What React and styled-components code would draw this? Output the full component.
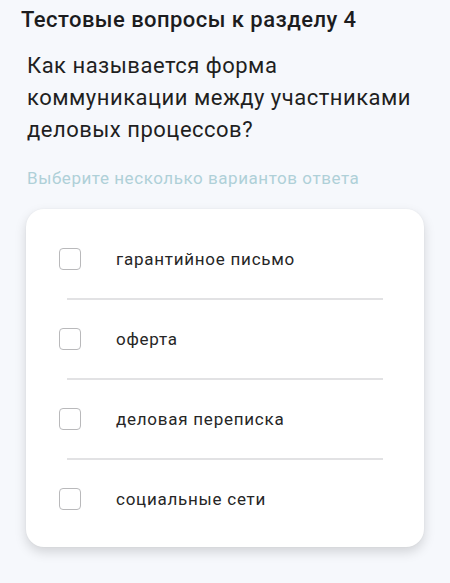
import React from "react";
import styled, { createGlobalStyle } from "styled-components";

const Global = createGlobalStyle`
  html, body { margin: 0; padding: 0; background: #f6f8fc; }
  body { font-family: Roboto, "Noto Sans", sans-serif; -webkit-font-smoothing: antialiased; }
`;

const Page = styled.div`
  width: 450px;
  min-height: 583px;
  box-sizing: border-box;
  padding: 7px 26px 0 21px;
  background: #f6f8fc;
`;

const Title = styled.h1`
  margin: 0;
  font-size: 22px;
  font-weight: 500;
  line-height: 26px;
  letter-spacing: 0.45px;
  color: #1c1c1e;
`;

const Question = styled.p`
  margin: 17px 0 0 6px;
  font-size: 22px;
  font-weight: 400;
  line-height: 32px;
  letter-spacing: 0.5px;
  color: #1f1f1f;
  max-width: 400px;
`;

const Hint = styled.p`
  margin: 22px 0 0 6px;
  font-size: 17px;
  font-weight: 400;
  line-height: 20px;
  letter-spacing: 0.55px;
  color: #afd0d8;
`;

const Card = styled.div`
  margin: 21px 0 0 5px;
  background: #fff;
  border-radius: 18px;
  box-shadow: 0 5px 12px rgba(0, 0, 0, 0.15), 0 0 2px rgba(0, 0, 0, 0.05);
  padding: 11px 0 9px;
`;

const Option = styled.label`
  display: flex;
  align-items: center;
  height: 78px;
  padding-left: 33px;
  box-sizing: border-box;
  cursor: pointer;
`;

const Divider = styled.div`
  height: 2px;
  margin: 0 41px;
  background: #e2e2e4;
`;

const Box = styled.span`
  width: 22px;
  height: 22px;
  box-sizing: border-box;
  border: 1.3px solid #b9b9bb;
  border-radius: 4px;
  flex-shrink: 0;
`;

const Label = styled.span`
  margin-left: 35px;
  font-size: 17px;
  letter-spacing: 0.75px;
  color: #262626;
`;

const options = ["гарантийное письмо", "оферта", "деловая переписка", "социальные сети"];

export default function App() {
  return (
    <Page>
      <Global />
      <Title>Тестовые вопросы к разделу 4</Title>
      <Question>Как называется форма коммуникации между участниками деловых процессов?</Question>
      <Hint>Выберите несколько вариантов ответа</Hint>
      <Card>
        {options.map((o, i) => (
          <React.Fragment key={o}>
            {i > 0 && <Divider />}
            <Option>
              <Box />
              <Label>{o}</Label>
            </Option>
          </React.Fragment>
        ))}
      </Card>
    </Page>
  );
}
